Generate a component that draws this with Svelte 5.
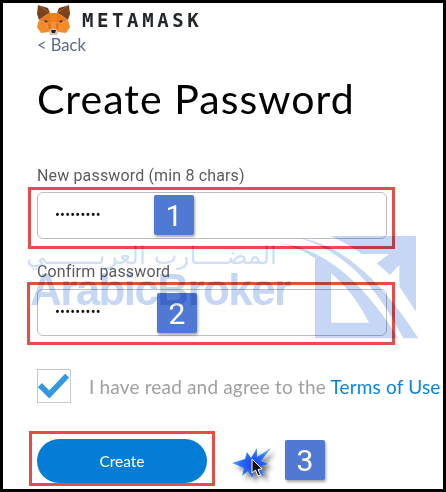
<script>
  const inputs = [
    { label: 'New password (min 8 chars)', num: '1' },
    { label: 'Confirm password', num: '2' }
  ];
</script>

<div class="shot">
  <div class="page">
    <header class="brand">
      <svg class="fox" viewBox="0 0 33 30" aria-hidden="true">
        <polygon points="1,0 13,8 11,3" fill="#763d16" />
        <polygon points="32,0 20,8 22,3" fill="#763d16" />
        <polygon points="1,0 0,9 2,15 9,10 13,8" fill="#7c4218" />
        <polygon points="32,0 33,9 31,15 24,10 20,8" fill="#7c4218" />
        <polygon points="13,8 20,8 23,13 19,17 14,17 10,13" fill="#f0811f" />
        <polygon points="9,10 13,8 14,17 10,19 2,15" fill="#e8791c" />
        <polygon points="24,10 20,8 19,17 23,19 31,15" fill="#e8791c" />
        <polygon points="2,15 10,19 12,27 4,28 0,22" fill="#f58b28" />
        <polygon points="31,15 23,19 21,27 29,28 33,22" fill="#f58b28" />
        <polygon points="10,19 14,17 14,24 12,27" fill="#e27520" />
        <polygon points="23,19 19,17 19,24 21,27" fill="#e27520" />
        <polygon points="14,17 19,17 19,24 14,24" fill="#f3913a" />
        <polygon points="7,15 11,16 9,18" fill="#45372b" />
        <polygon points="26,15 22,16 24,18" fill="#45372b" />
        <polygon points="12,27 14,24 19,24 21,27 20,30 13,30" fill="#d7c1b3" />
        <polygon points="14,25 19,25 18,28 15,28" fill="#231f20" />
      </svg>
      <span class="wordmark">METAMASK</span>
    </header>
    <a class="back" href="#back">&lt; Back</a>
    <h1>Create Password</h1>

    {#each inputs as item}
      <div class="field">
        <div class="label">{item.label}</div>
        <div class="input">
          <span class="dots">•••••••••</span>
          <span class="num">{item.num}</span>
        </div>
      </div>
    {/each}

    <div class="terms">
      <span class="check">
        <svg viewBox="0 0 34 34" aria-hidden="true">
          <path d="M2 16 L12 26 L31 6" fill="none" stroke="#3398e2" stroke-width="6" />
        </svg>
      </span>
      <span class="terms-text">I have read and agree to the <a href="#terms">Terms of Use</a></span>
    </div>

    <div class="actions">
      <button class="create">Create</button>
      <svg class="burst" viewBox="0 0 44 38" aria-hidden="true">
        <defs>
          <radialGradient id="burstFill" cx="0.55" cy="0.55" r="0.55">
            <stop offset="0" stop-color="#1a3cf0" />
            <stop offset="0.6" stop-color="#2a6cf6" />
            <stop offset="1" stop-color="#58a8fa" />
          </radialGradient>
          <filter id="burstShadow" x="-30%" y="-30%" width="170%" height="170%">
            <feDropShadow dx="4" dy="4" stdDeviation="2.5" flood-color="#000" flood-opacity="0.55" />
          </filter>
        </defs>
        <polygon
          filter="url(#burstShadow)"
          fill="url(#burstFill)"
          points="1,17 14,13 16,6 20,12 26,2 26,11 40,2 30,15 37,18 30,20 33,31 24,24 21,32 17,25 11,30 13,22"
        />
        <path d="M21 13 L21 27 L24.5 24 L27 30 L29.5 29 L27 23.5 L31 23 Z" fill="#111" stroke="#fff" stroke-width="1" />
      </svg>
      <span class="num three">3</span>
    </div>
  </div>

  <div class="outline out1"></div>
  <div class="outline out2"></div>
  <div class="outline out3"></div>

  <div class="mark" aria-hidden="true">
    <div class="mark-ar">المضــــارب العربـــــــي</div>
    <div class="mark-en">ArabicBroker</div>
    <svg class="mark-logo" viewBox="0 0 480 345">
      <path fill-rule="evenodd" d="M20 38 C150 50 270 140 385 325 L135 325 L135 85 C100 60 60 45 20 38 Z M183 130 L183 278 L297 278 C265 215 230 170 183 130 Z" />
      <path d="M90 25 C200 40 320 130 445 325 L400 325 C330 190 240 70 90 25 Z" />
      <path d="M180 18 L438 18 L438 245 C425 225 405 195 388 170 L388 105 L360 135 L320 100 L358 72 L275 72 C245 50 215 32 180 18 Z" />
    </svg>
  </div>
</div>

<style>
  :global(body) { margin: 0; background: #000; }

  .shot { position: relative; width: 446px; height: 492px; box-sizing: border-box; border: 3px solid #000; overflow: hidden; background: #000; }
  .page { background: #fff; height: 100%; padding: 2px 0 0 34px; box-sizing: border-box; font-family: Lato, sans-serif; }

  .brand { display: flex; align-items: center; height: 30px; gap: 12px; }
  .fox { width: 33px; height: 30px; flex: none; }
  .wordmark { font-family: "DejaVu Sans Mono", monospace; font-weight: 700; font-size: 19px; letter-spacing: 3.6px; color: #24272a; }

  .back { display: block; margin-top: 2px; font-size: 16.5px; line-height: 16px; color: #5b6b8a; text-decoration: none; }

  h1 { margin: 21px 0 0; font-family: Lato, sans-serif; font-weight: 400; font-size: 41px; letter-spacing: 1.05px; line-height: 50px; color: #000; }

  .field { width: 350px; }
  .label { font-family: Roboto, sans-serif; font-size: 16px; letter-spacing: 0.15px; line-height: 20px; color: #5c5c5c; }
  .field:nth-of-type(1) { margin-top: 42px; }
  .field:nth-of-type(2) { margin-top: 23px; }

  .input { position: relative; margin-top: 6px; height: 47px; box-sizing: border-box; border: 1px solid #b9bec4; border-radius: 6px; display: flex; align-items: center; padding-left: 17px; }
  .field:nth-of-type(2) .input { margin-top: 7px; }
  .dots { font-family: Roboto, sans-serif; font-size: 14.5px; letter-spacing: 0.2px; color: #111; }

  .num { display: flex; align-items: center; justify-content: center; width: 40px; height: 40px; background: #5079d3; border-radius: 2px; box-shadow: 1px 2px 3px rgba(0, 0, 0, 0.35); color: #fff; font-family: Roboto, sans-serif; font-size: 30px; }
  .input .num { position: absolute; left: 116px; top: 2px; }
  .field:nth-of-type(2) .input .num { left: 119px; top: 3px; }

  .terms { display: flex; align-items: center; margin-top: 33px; }
  .check { width: 32px; height: 32px; border: 1px solid #c8c8c8; flex: none; }
  .check svg { display: block; width: 32px; height: 32px; }
  .terms-text { margin-left: 18px; font-size: 19px; letter-spacing: 0.17px; color: #a0a0a0; white-space: nowrap; }
  .terms-text a { color: #0a84e0; text-decoration: none; }

  .actions { display: flex; align-items: center; margin-top: 35px; }
  .create { width: 170px; height: 44px; border: 0; border-radius: 22px; background: #037dd6; color: #fff; font-family: Lato, sans-serif; font-size: 15.5px; }
  .burst { width: 44px; height: 38px; margin: 8px 0 0 24px; overflow: visible; }
  .three { margin: -2px 0 0 10px; }

  .outline { position: absolute; border: 3px solid #e84c46; box-sizing: border-box; pointer-events: none; }
  .out1 { left: 25px; top: 184px; width: 367px; height: 62px; }
  .out2 { left: 24px; top: 279px; width: 368px; height: 63px; }
  .out3 { left: 26px; top: 428px; width: 186px; height: 55px; }

  .mark { position: absolute; inset: -3px; mix-blend-mode: multiply; pointer-events: none; }
  .mark-ar { position: absolute; left: 30px; top: 241px; width: 247px; font-family: "DejaVu Sans", sans-serif; font-size: 25px; line-height: 30px; color: #cfdff7; white-space: nowrap; direction: rtl; }
  .mark-en { position: absolute; left: 30px; top: 266px; font-family: "Liberation Sans", sans-serif; font-weight: 700; font-size: 44px; line-height: 48px; color: #c5d7f5; letter-spacing: -1.6px; white-space: nowrap; }
  .mark-logo { position: absolute; left: 270px; top: 230px; width: 160px; height: 115px; fill: #c5d7f5; }
</style>
